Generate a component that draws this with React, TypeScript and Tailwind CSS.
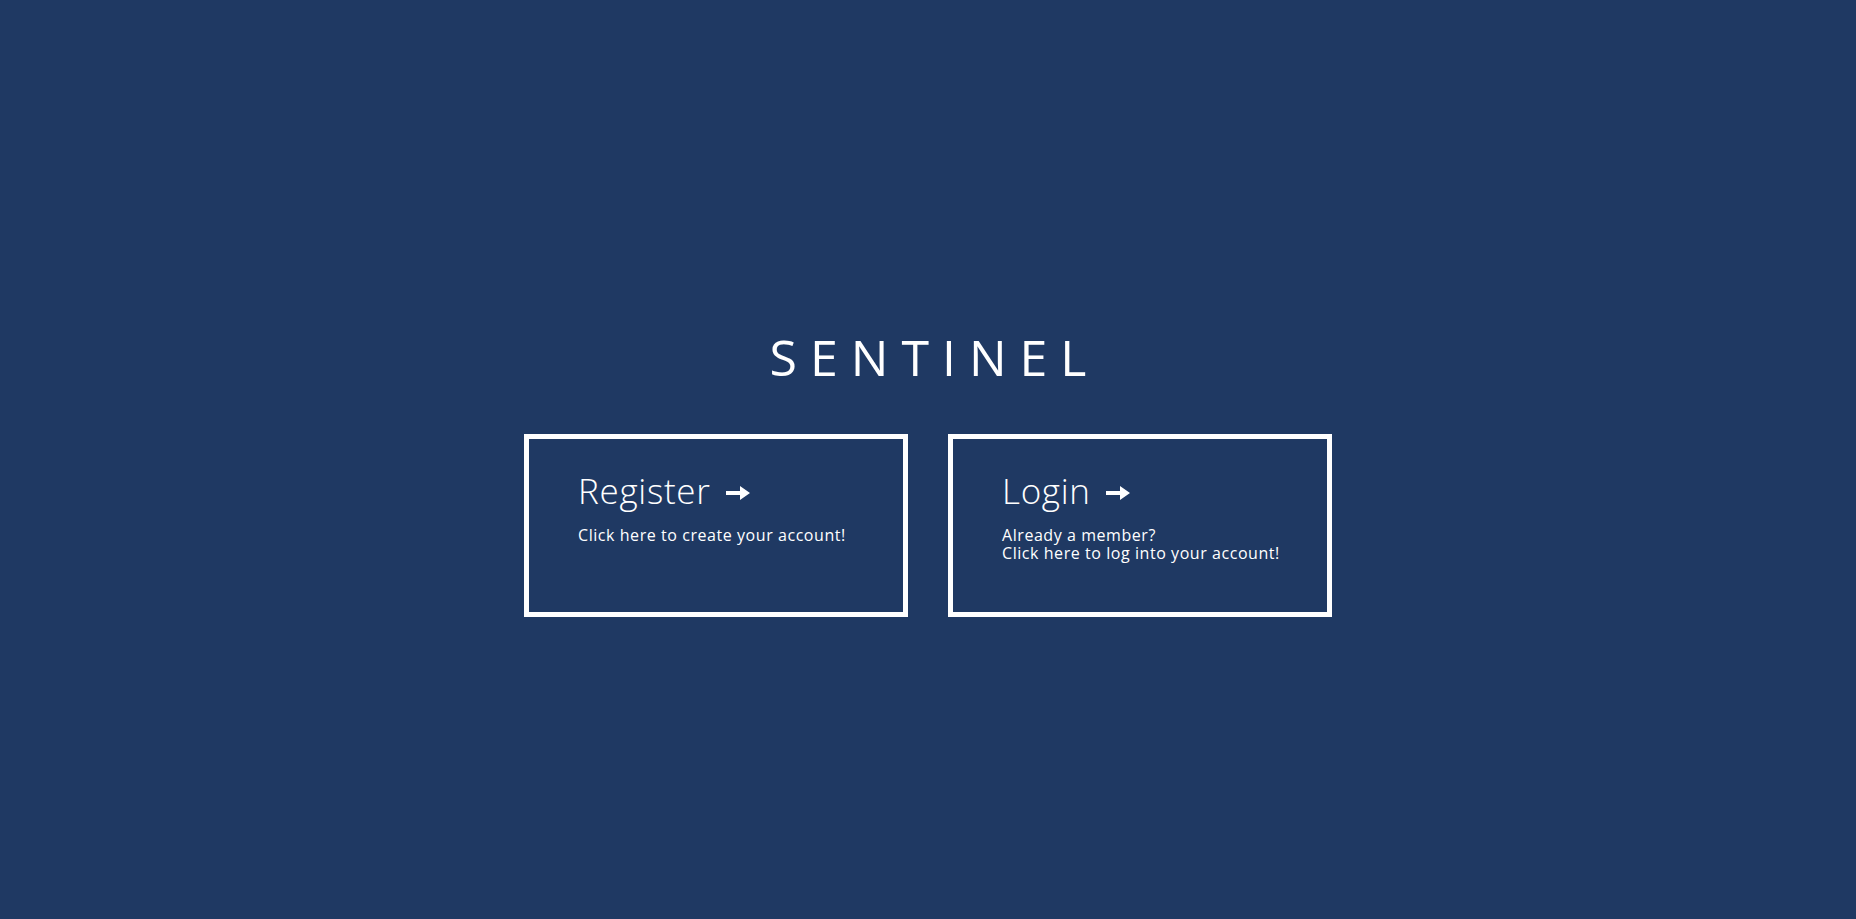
import { ReactNode } from "react";

const Arrow = () => (
  <svg width="24" height="14" viewBox="0 0 24 14" className="ml-[15px] mt-[4px]">
    <path d="M0 5 H14 V0 L24 7 L14 14 V9 H0 Z" fill="white" />
  </svg>
);

const Card = ({ title, children }: { title: string; children: ReactNode }) => {
  return (
    <div className="w-[384px] h-[183px] border-[5px] border-white pl-[49px] pt-[34px] cursor-pointer">
      <div className="flex items-center">
        <h2 className="text-[35px] leading-none font-light tracking-[0.02em]">{title}</h2>
        <Arrow />
      </div>
      <p className="mt-[18px] text-[16px] leading-[18px] font-normal tracking-[0.035em]">{children}</p>
    </div>
  );
};

const App = () => {
  return (
    <div
      className="h-screen w-full bg-[#1f3963] text-white flex flex-col items-center pt-[332px]"
      style={{ fontFamily: '"Open Sans", "Noto Sans", sans-serif' }}
    >
      <h1 className="text-[50px] leading-none tracking-[0.26em] pl-[0.26em] font-medium">SENTINEL</h1>
      <div className="flex gap-10 mt-[52px]">
        <Card title="Register">Click here to create your account!</Card>
        <Card title="Login">
          Already a member?
          <br />
          Click here to log into your account!
        </Card>
      </div>
    </div>
  );
};

export default App;
